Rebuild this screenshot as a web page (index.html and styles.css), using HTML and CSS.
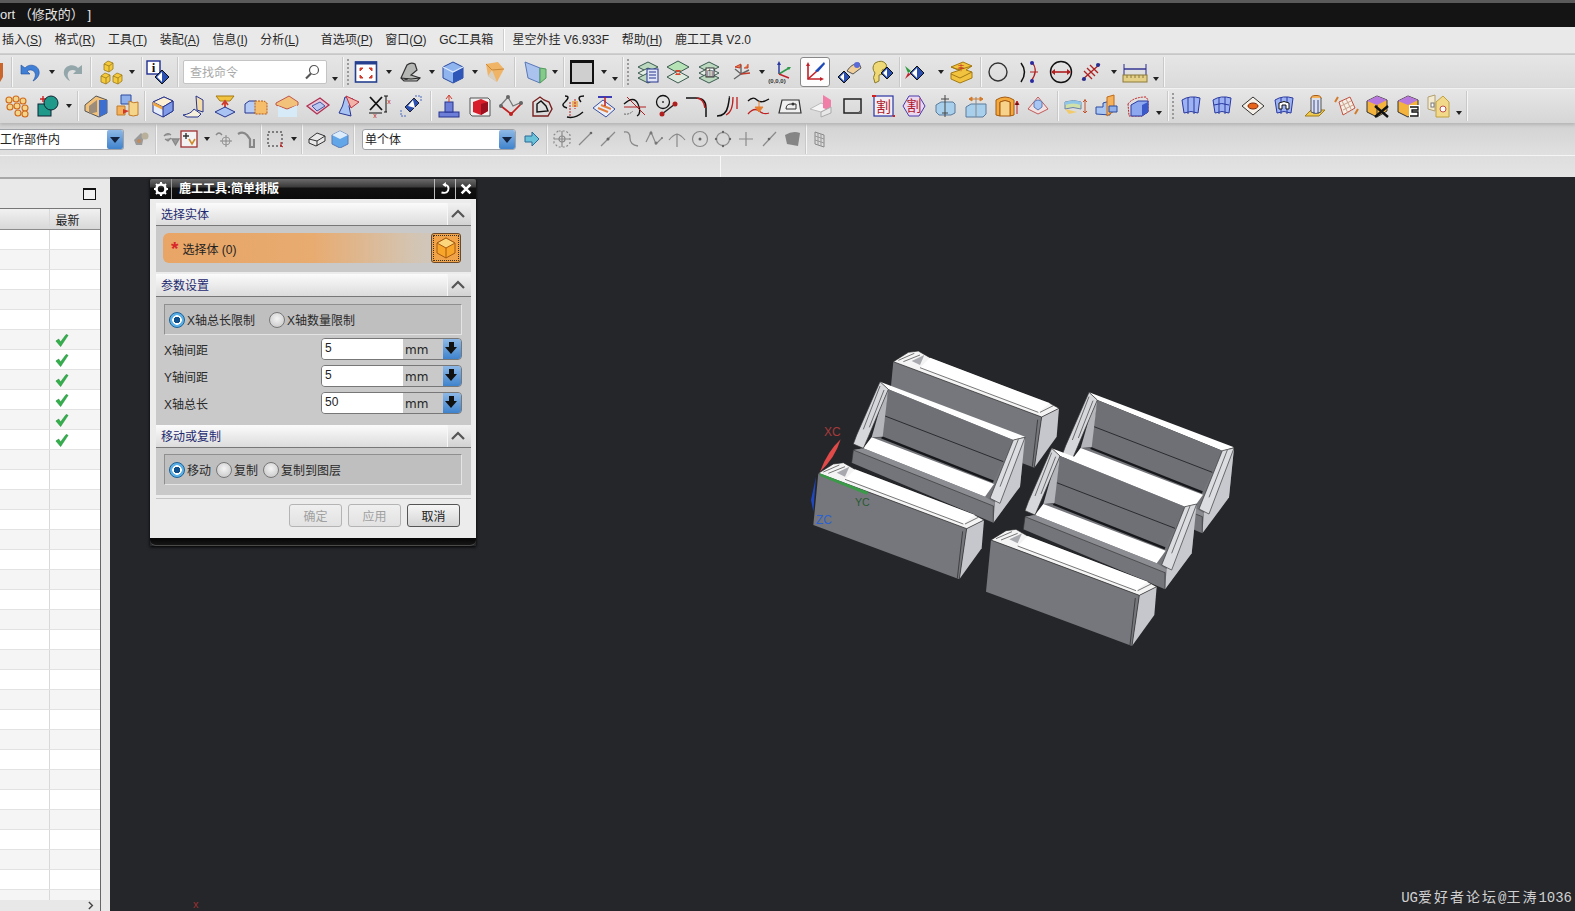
FILE: index.html
```html
<!DOCTYPE html>
<html lang="zh">
<head>
<meta charset="utf-8">
<title>NX</title>
<link rel="stylesheet" href="styles.css">
</head>
<body>
<svg class="defs" width="0" height="0">
  <defs>
    <g id="yc"><path d="M0 3 4 0l5 2v6l-4 3-5-2z" fill="#f4c93c" stroke="#9a7a1c" stroke-width=".8"/><path d="M0 3l5 2 4-3M5 5v6" fill="none" stroke="#9a7a1c" stroke-width=".8"/></g>
    <g id="cube"><path d="M2 7 12 2l10 5v11l-10 5-10-5z" fill="#8fb4ee" stroke="#2c4aa0"/><path d="M12 12 22 7v11l-10 5z" fill="#2e55b8"/><path d="M2 7l10 5 10-5" fill="none" stroke="#dfeaff" stroke-width="1.2"/></g>
    <g id="obox"><path d="M2 8 13 3l9 4v10l-10 6-10-5z" fill="#e6edfb" stroke="#27358f"/><path d="M2 8l10 5 10-6-9-4z" fill="#fdf0d2" stroke="#27358f"/><path d="M2 11l10 5v-3L2 8z" fill="#f2a53c"/><path d="M12 13l10-6v10l-10 6z" fill="#7f9ae6" stroke="#27358f"/></g>
    <g id="stack"><path d="M12 2 22 7l-10 5L2 7z" fill="#bcd9c0" stroke="#3a5a50"/><path d="M12 8 22 13l-10 5L2 13z" fill="#e6efe6" stroke="#3a5a50"/><path d="M12 13 22 18l-10 5L2 18z" fill="#bcd9c0" stroke="#3a5a50"/></g>
    <g id="face"><path d="M3 6q8-5 18-2l-2 15q-7-3-14 0z" fill="#9db2f2" stroke="#2838a0"/><path d="M9 4v16M15 3v17" stroke="#2838a0" fill="none"/></g>
    <path id="tick" d="M1 7l3-2 2 3 6-8 2 1-8 12z" fill="#33b04b" stroke="#1d8a36" stroke-width=".6"/>
    <g id="openB">
      <path d="M640 297 675 292 660 440 580 548 155 368 160 330 190 325 215 292z" fill="#74757a"/>
      <path d="M240 125 675 290 640 300 265 148z" fill="#fff"/>
      <path d="M265 148 640 300 580 425 245 290z" fill="#6f7075"/>
      <path d="M255 228 610 365" stroke="#2a2b2f" stroke-width="3"/>
      <path d="M245 292 580 425" stroke="#17181b" stroke-width="7"/>
      <path d="M215 292 582 432 555 470 190 325z" fill="#fff"/>
      <path d="M160 330 190 325 555 470 585 488 580 498z" fill="#8c8d92"/>
      <path d="M675 292 660 440 580 548 585 488 640 300z" fill="#c8c9cf"/>
      <path d="M265 148 248 290 215 292 240 205z" fill="#b4b5bb"/>
      <path d="M240 125 265 148 205 290 190 325 160 312 170 285z" fill="#d6d7db" stroke="#333" stroke-width="2"/>
      <path d="M190 268 240 138M208 262 252 150" stroke="#333" stroke-width="2" fill="none"/>
      <path d="M640 300 675 292 600 490 570 475z" fill="#dcdde1" stroke="#333" stroke-width="2"/>
      <path d="M600 440 655 298" stroke="#333" stroke-width="2"/>
      <path d="M160 330 580 498 580 548M155 368 160 330" fill="none" stroke="#333" stroke-width="2"/>
    </g>
    <g id="solidB">
      <path d="M55 400 500 566 478 718 40 555z" fill="#76777c"/>
      <path d="M500 566 552 540 545 625 478 718z" fill="#c6c7cd"/>
      <path d="M55 400 100 372 130 368 165 388 525 525 530 528 552 540 500 566z" fill="#f4f4f5" stroke="#222" stroke-width="2"/>
      <path d="M135 418 165 388 525 525 490 552z" fill="#fff"/>
      <path d="M110 398 148 380 135 410z" fill="#a8a9ae"/>
      <path d="M70 396 118 375M85 400 135 380M495 552 535 532M135 418 490 552" stroke="#333" stroke-width="2" fill="none"/>
      <path d="M500 566 478 718M488 574 472 715" fill="none" stroke="#222" stroke-width="2"/>
    </g>
  </defs>
</svg>

<div class="app">
  <header class="titlebar">ort （修改的） ]</header>

  <nav class="menubar">
    <span class="mi">插入(<u>S</u>)</span><span class="mi">格式(<u>R</u>)</span><span class="mi">工具(<u>T</u>)</span><span class="mi">装配(<u>A</u>)</span><span class="mi">信息(<u>I</u>)</span><span class="mi">分析(<u>L</u>)</span><span class="mi gapl">首选项(<u>P</u>)</span><span class="mi">窗口(<u>O</u>)</span><span class="mi">GC工具箱</span><span class="msep"></span><span class="mi">星空外挂 V6.933F</span><span class="mi">帮助(<u>H</u>)</span><span class="mi">鹿工工具 V2.0</span>
  </nav>

  <div class="tb tb1">
    <svg class="sliver" viewBox="0 0 4 24"><path d="M0 3h3v14l-3 5z" fill="#c9662c"/></svg>
    <i class="sep m8"></i>
    <svg class="ic m5" viewBox="0 0 24 24"><path d="M3 5v9h9l-3-3c3-2 7-1 8 2 1 2 0 5-2 8 4-2 7-6 6-10C20 5 11 3 7 8z" fill="#3f7fd6" stroke="#1f4fa0" stroke-width=".6"/></svg>
    <i class="dd m5"></i>
    <svg class="ic m4" viewBox="0 0 24 24"><path d="M21 5v9h-9l3-3c-3-2-7-1-8 2-1 2 0 5 2 8-4-2-7-6-6-10C4 5 13 3 17 8z" fill="#93a7ab"/></svg>
    <i class="sep m6"></i>
    <svg class="ic m7" viewBox="0 0 24 24"><use href="#yc" x="5" y="1"/><use href="#yc" x="2" y="13"/><use href="#yc" x="14" y="13"/></svg>
    <i class="dd m4"></i>
    <i class="sep m5"></i>
    <svg class="ic m3" viewBox="0 0 24 24"><rect x="1" y="1" width="13" height="13" fill="#fff" stroke="#1f2f8f" stroke-width="1.4"/><text x="7.5" y="12" class="svgi">i</text><path d="M16 10l7 7-7 7-7-7z" fill="#2c50b0" stroke="#111"/><path d="M16 12v10l-5-5z" fill="#fff"/></svg>
    <i class="sep m8"></i>
    <div class="search m4"><span>查找命令</span><svg class="lens" viewBox="0 0 16 16"><circle cx="10" cy="6" r="4.5" fill="#fff" stroke="#555" stroke-width="1.2"/><path d="M7 9.5 2 14.5" stroke="#555" stroke-width="2.2"/></svg></div>
    <i class="dd low m3"></i>
    <i class="sep m3"></i><i class="grip m3"></i>
    <svg class="ic m4" viewBox="0 0 24 24"><rect x="1.5" y="2" width="21" height="20" fill="#fff" stroke="#25408f" stroke-width="1.6"/><rect x="1" y="1.500" width="22" height="3" fill="#25408f"/><path d="M6 8h3L6 11zM18 8h-3l3 3zM6 18h3l-3-3zM18 18h-3l3-3z" fill="#d23a2a" stroke="#d23a2a"/></svg>
    <i class="dd m6"></i>
    <svg class="ic m4" viewBox="0 0 24 24"><path d="M3 18 9 5q4-3 8-1l2 6-6 5 9 3-3 3H6z" fill="#b5b7b5" stroke="#333" stroke-width="1.2"/><path d="M3 18l10 1 9-1" stroke="#222" fill="none"/><ellipse cx="8" cy="19" rx="2" ry="1" fill="#333"/></svg>
    <i class="dd m5"></i>
    <svg class="ic m4" viewBox="0 0 24 24"><use href="#cube"/></svg>
    <i class="dd m5"></i>
    <svg class="ic m3" viewBox="0 0 24 24"><path d="M3 4 15 2l6 7-7 13-9-6z" fill="#f0b467"/><path d="M3 4l6 6 12-1" fill="none" stroke="#c9893a"/><path d="M9 10l5 12-9-6z" fill="#d6d0c4"/></svg>
    <i class="sep m8"></i>
    <svg class="ic m7" viewBox="0 0 24 24"><path d="M2 2l15 6v15L5 18z" fill="#a9c2ee" stroke="#5a78b8"/><path d="M17 8l6 1v9l-6 5z" fill="#86c98d" stroke="#4d9b58"/></svg>
    <i class="dd m3"></i>
    <i class="sep m4"></i>
    <div class="swatch m5"></div>
    <i class="dd m5"></i><i class="dd low m1"></i>
    <i class="sep m3"></i><i class="grip m3"></i>
    <svg class="ic m6" viewBox="0 0 24 24"><use href="#stack"/><rect x="11" y="9" width="11" height="13" fill="#dfe5f6" stroke="#27358f"/><path d="M13 12h7M13 15h7M13 18h7" stroke="#27358f"/></svg>
    <svg class="ic m6" viewBox="0 0 24 24"><path d="M12 1 23 7l-11 6L1 7z" fill="#b6e3b6" stroke="#3a5a50"/><path d="M12 11 23 17l-11 6L1 17z" fill="#dce9dc" stroke="#3a5a50"/><path d="M9 10h6l-3 4zM9 15h6l-3-4z" fill="#d9442a"/></svg>
    <svg class="ic m7" viewBox="0 0 24 24"><use href="#stack"/><rect x="9" y="8" width="8" height="9" fill="#fff" stroke="#333"/><text x="13" y="16" class="svgj">血</text></svg>
    <svg class="ic m8" viewBox="0 0 24 24"><path d="M12 5v9l8-4M12 14l-7 5M12 14 6 9" fill="none" stroke="#666" stroke-width="1.4"/><path d="M15 8h4v-4M12 4l-6 3 5 1z" fill="#e8844a" stroke="#c23a2a"/><path d="M12 14l9-1" stroke="#c23a2a" stroke-width="1.6"/></svg>
    <i class="dd m4"></i>
    <svg class="ic m2" viewBox="0 0 24 24"><path d="M10 14V3" stroke="#2a3aa0" stroke-width="1.5"/><path d="M10 1l2 4H8z" fill="#2a3aa0"/><path d="M10 14 20 8" stroke="#2e9a4a" stroke-width="1.5"/><path d="M22 7l-4 0 2 3z" fill="#2e9a4a"/><path d="M10 14 20 18" stroke="#c0202a" stroke-width="1.5"/><text x="8" y="23" class="svgt">(0,0,0)</text></svg>
    <div class="btn-on m7"><svg class="ic" viewBox="0 0 24 24"><path d="M5 4v15h13" fill="none" stroke="#c0202a" stroke-width="1.6"/><path d="M5 19l9-8" stroke="#c0202a" stroke-width="1.6"/><path d="M12 11l9-9 1 2-7 8z" fill="#1d48b8"/><path d="M5 2 3 6h4zM21 19l-4-2v4z" fill="#c0202a"/></svg></div>
    <svg class="ic m8" viewBox="0 0 24 24"><path d="M6 11l6 6-6 6-6-6z" fill="#2c50b0" stroke="#111"/><path d="M6 13v8l-4-4z" fill="#fff"/><path d="M9 11q4-7 12-8l2 5-8 6z" fill="#f1cf9a" stroke="#555"/><circle cx="19" cy="5" r="3" fill="#5a6bd8"/></svg>
    <svg class="ic m8" viewBox="0 0 24 24"><path d="M5 23q-3-6 0-10Q1 8 5 3q7-4 11 1 2 4-4 6l1 4-4 1v6z" fill="#efd977" stroke="#8a7a2a"/><path d="M17 7l6 6-6 6-6-6z" fill="#2c50b0" stroke="#111"/><path d="M17 9v8l-4-4z" fill="#fff"/></svg>
    <i class="sep m6"></i>
    <svg class="ic m2" viewBox="0 0 24 24"><path d="M14 6l7 7-7 7-7-7z" fill="#2c50b0" stroke="#111"/><path d="M14 8v10l-5-5z" fill="#fff"/><path d="M2 6l6 5-3 2z" fill="#2a9a3a"/><path d="M2 19l6-5-3-1z" fill="#c0202a"/></svg>
    <i class="dd m9"></i>
    <svg class="ic m3" viewBox="0 0 24 24"><path d="M2 7 14 2l9 4-6 4 6 2v6l-12 5-9-4v-6l9-3-9-3z" fill="#f2c33e" stroke="#a47a14"/><path d="M2 7l7 3 14-4M2 14l9 4 12-6" fill="none" stroke="#a47a14"/><text x="12" y="10" class="svgr">丰</text></svg>
    <i class="sep m8"></i>
    <svg class="ic m4" viewBox="0 0 24 24"><circle cx="12" cy="12" r="9" fill="none" stroke="#333" stroke-width="1.4"/></svg>
    <svg class="ic m8" viewBox="0 0 24 24"><path d="M3 3q7 9 0 19" fill="none" stroke="#111" stroke-width="1.5"/><path d="M14 2q7 9-1 19" fill="none" stroke="#b02020" stroke-width="1.2"/><circle cx="14" cy="3" r="2" fill="#2a2aa0"/><circle cx="14" cy="21" r="2" fill="#2a2aa0"/><path d="M12 12h8" stroke="#b02020"/></svg>
    <svg class="ic m7" viewBox="0 0 24 24"><circle cx="12" cy="12" r="10.500" fill="none" stroke="#111" stroke-width="1.4"/><path d="M3 12h18" stroke="#b02020" stroke-width="1.6"/><path d="M2 12l4-3v6zM22 12l-4-3v6z" fill="#b02020"/></svg>
    <svg class="ic m6" viewBox="0 0 24 24"><path d="M3 20 21 4M8 8l8 8M5 11l8 8M11 5l8 8" stroke="#b02020" stroke-width="1.3" fill="none"/><circle cx="19" cy="5" r="2" fill="#23308f"/><circle cx="5" cy="19" r="2" fill="#23308f"/></svg>
    <i class="dd m6"></i>
    <svg class="ic m4" viewBox="0 0 24 24"><path d="M1 4v11M23 4v11" stroke="#2a2a90"/><path d="M1 9h22" stroke="#2a2a90" stroke-width="1.400"/><rect x="0" y="15" width="24" height="7" fill="#e3cf86" stroke="#8a7a3a"/><path d="M4 15v3M8 15v3M12 15v3M16 15v3M20 15v3" stroke="#8a7a3a"/></svg>
    <i class="dd low m4"></i>
    <i class="sep m3"></i>
  </div>

  <div class="tb tb2">
    <div class="grp m5">
      <svg class="ic" viewBox="0 0 24 24"><g fill="#f2d48a" stroke="#d06a1a" stroke-width="1.1"><circle cx="4" cy="6" r="3"/><circle cx="11" cy="5" r="3"/><circle cx="18" cy="7" r="3"/><circle cx="5" cy="13" r="3"/><circle cx="12" cy="12" r="3"/><circle cx="20" cy="14" r="3"/><circle cx="13" cy="19" r="3"/><circle cx="20" cy="20" r="3"/></g></svg>
      <svg class="ic" viewBox="0 0 24 24"><path d="M7 2v6M4 5h6" stroke="#d02020" stroke-width="1.400"/><rect x="2" y="10" width="13" height="12" fill="#1f9a8a" stroke="#123"/><circle cx="15" cy="9" r="7" fill="#1f9a8a" stroke="#123"/></svg>
    </div>
    <i class="dd m4"></i><i class="sep m4"></i>
    <div class="grp m5">
      <svg class="ic" viewBox="0 0 24 24"><path d="M1 11 12 2l11 4v13l-8 4L1 17z" fill="#f2c27a" stroke="#555"/><path d="M15 6h8v13l-8 4z" fill="#3c6fcf"/><path d="M5 12l8-6v12l-8 2z" fill="#9c8c7c"/></svg>
      <svg class="ic" viewBox="0 0 24 24"><path d="M6 1h10v9H6z" fill="#8fb0ea" stroke="#2c4aa0"/><path d="M14 7q5 3 9 1v13q-5 2-9 0z" fill="#f5d58a" stroke="#c07a2a"/><path d="M2 12l8 0v9H2z" fill="#f5b25a" stroke="#c07a2a"/><path d="M8 15l6 2-6 3z" fill="#d03a2a"/></svg>
    </div>
    <i class="sep m6"></i>
    <div class="grp m5">
      <svg class="ic" viewBox="0 0 24 24"><use href="#obox"/></svg>
      <svg class="ic" viewBox="0 0 24 24"><path d="M14 2l7 4v12l-6-2z" fill="#f3dca8" stroke="#27358f"/><path d="M1 21q8-1 11-6l7 5-3 3H5z" fill="#f5efdc" stroke="#27358f"/></svg>
      <svg class="ic" viewBox="0 0 24 24"><path d="M3 2h18l-4 5H7z" fill="#f2c33e" stroke="#a47a14"/><path d="M12 16V8m-3 3 3-4 3 4" stroke="#d03a2a" stroke-width="1.800" fill="none"/><path d="M2 18 12 13l10 5-10 5z" fill="#a9c3f2" stroke="#27358f"/></svg>
      <svg class="ic" viewBox="0 0 24 24"><path d="M1 10l4-3h7v12H1z" fill="#b6ccf4" stroke="#27358f"/><path d="M11 7h9l3 2v11H11z" fill="#f6be6a" stroke="#b25a1a" stroke-dasharray="2 1"/></svg>
      <svg class="ic" viewBox="0 0 24 24"><path d="M1 9 14 2l9 6v3L12 15 1 11z" fill="#f3c27a" stroke="#c0554a"/><path d="M3 12l9 4 10-5v12H3z" fill="#d7eaf8"/></svg>
      <svg class="ic" viewBox="0 0 24 24"><path d="M1 12 14 4l9 7-12 9z" fill="#e7c6d8" stroke="#b03050" stroke-width="1.300"/><path d="M6 12l8-4 5 4-8 5z" fill="#b8c6f0" stroke="#44559f"/></svg>
      <svg class="ic" viewBox="0 0 24 24"><path d="M8 3l8 2-4 7 2 10-12-3q4-6 6-16z" fill="#a8c2f2" stroke="#27358f"/><path d="M9 2l13 6-8 6z" fill="#f2b3a8" stroke="#c03040"/></svg>
      <svg class="ic" viewBox="0 0 24 24"><path d="M2 3l12 13M14 3 2 16" stroke="#111" stroke-width="1.800"/><path d="M1 19h13" stroke="#111"/><path d="M16 2h4M18 2v16M16 18h3" stroke="#111"/><text x="21" y="10" class="svgx">x</text><text x="7" y="24" class="svgx">x</text></svg>
      <svg class="ic" viewBox="0 0 24 24"><path d="M6 13l9-9 5 5-9 9z" fill="#2c50b0" stroke="#223"/><path d="M9 12l5-6 2 8z" fill="#fff"/><path d="M2 16v6h6M21 2h-6M22 2v6" stroke="#4a6ac0" stroke-dasharray="2 1" fill="none"/></svg>
    </div>
    <i class="sep m8"></i>
    <div class="grp m5">
      <svg class="ic" viewBox="0 0 24 24"><rect x="2" y="18" width="20" height="5" fill="#6d7ed8" stroke="#27358f"/><rect x="8" y="8" width="8" height="10" fill="#6d7ed8" stroke="#27358f"/><path d="M12 8V2M9 5l3-4 3 4" stroke="#d03a2a" fill="none"/></svg>
      <svg class="ic" viewBox="0 0 24 24"><path d="M2 4h18l2 2v16H4l-2-2z" fill="#f0f0f0" stroke="#555"/><path d="M5 8l8-3 7 3v9l-7 4-8-3z" fill="#d81e2a"/><path d="M13 10l7-2v9l-7 4z" fill="#9a1020"/></svg>
      <svg class="ic" viewBox="0 0 24 24"><path d="M1 12 9 3l5 9 9-4" fill="none" stroke="#777" stroke-width="1.300"/><path d="M2 12l10 8L23 9" fill="none" stroke="#c02020" stroke-width="1.700"/><circle cx="2" cy="12" r="2" fill="#666"/><circle cx="9" cy="3" r="2" fill="#666"/><circle cx="22" cy="9" r="2" fill="#666"/><circle cx="12" cy="20" r="2" fill="#c02020"/></svg>
      <svg class="ic" viewBox="0 0 24 24"><path d="M3 22V8l7-5 4 3 5 2 3 7-4 7z" fill="none" stroke="#7a2020" stroke-width="1.400"/><path d="M7 18V10l4-3 5 5 2 5z" fill="none" stroke="#111" stroke-width="1.400"/></svg>
      <svg class="ic" viewBox="0 0 24 24"><path d="M4 2q6 0 0 6-5 4 2 6M23 2q-8 0-3 6M6 23q8 2 16-5" fill="none" stroke="#111" stroke-width="1.400"/><rect x="11" y="7" width="6" height="6" fill="#e6b26a"/><path d="M14 5v10M9 8v14" stroke="#c02020" stroke-dasharray="2 1"/></svg>
      <svg class="ic" viewBox="0 0 24 24"><path d="M1 14 11 6l12 9-9 8z" fill="#e9eef8" stroke="#3a4fa0"/><path d="M6 14l10 4M9 11l10 4" stroke="#e08040" stroke-width="2"/><path d="M6 3h14" stroke="#2a2ab0" stroke-width="1.800"/><path d="M13 3v9" stroke="#c02020" stroke-width="1.500"/></svg>
      <svg class="ic" viewBox="0 0 24 24"><path d="M1 10q10-9 14 0t-1 12" fill="none" stroke="#111" stroke-width="1.300"/><path d="M1 13h22M4 3l18 18" stroke="#b02020"/><path d="M1 20q5 1 9-3" stroke="#666" stroke-dasharray="2 1" fill="none"/></svg>
      <svg class="ic" viewBox="0 0 24 24"><circle cx="9" cy="8" r="6.500" fill="none" stroke="#111" stroke-width="1.300"/><circle cx="9" cy="8" r="1" fill="#333"/><path d="M8 20 21 10" stroke="#222" stroke-width="1.400"/><circle cx="8" cy="20" r="2.500" fill="#b02020"/><circle cx="21" cy="10" r="2.500" fill="#b02020"/></svg>
      <svg class="ic" viewBox="0 0 24 24"><path d="M1 4h10q10 0 10 10v9" fill="none" stroke="#111" stroke-width="1.500"/><path d="M12 4q7 1 8 10" fill="none" stroke="#c02020" stroke-width="1.500"/></svg>
      <svg class="ic" viewBox="0 0 24 24"><path d="M1 22q9 0 11-10t1-9" fill="none" stroke="#111" stroke-width="1.500"/><path d="M10 21q7-3 7-18M21 3v12" fill="none" stroke="#c02020" stroke-width="1.300"/></svg>
      <svg class="ic" viewBox="0 0 24 24"><path d="M1 7q5-5 9-1t12-1" fill="none" stroke="#111" stroke-width="1.300"/><path d="M1 20q6-7 11-3t10 2" fill="none" stroke="#c02020" stroke-width="1.300"/><path d="M12 7v6m-4 0h8l-4 5z" fill="#e67e2e" stroke="#e67e2e"/></svg>
      <svg class="ic" viewBox="0 0 24 24"><path d="M4 6h17l2 13H1z" fill="#f0f0f0" stroke="#333" stroke-width="1.200"/><path d="M8 15q0-5 5-5h5v5z" fill="none" stroke="#333"/><circle cx="15" cy="10" r="1.500" fill="#333"/></svg>
      <svg class="ic" viewBox="0 0 24 24"><path d="M1 15 12 9l10 4-10 5z" fill="#f5f5f5" stroke="#bbb"/><path d="M14 1 22 6v11l-8-3z" fill="#f07fa8"/><path d="M12 18l10-5v6l-10 4z" fill="#e8e8e8" stroke="#aaa"/></svg>
      <svg class="ic" viewBox="0 0 24 24"><rect x="4" y="5" width="17" height="14" fill="none" stroke="#222" stroke-width="1.500"/><circle cx="20" cy="18" r="1.300" fill="#666"/></svg>
      <svg class="ic" viewBox="0 0 24 24"><rect x="3" y="2" width="19" height="20" fill="#f3eef4" stroke="#2a34a0" stroke-width="1.200"/><text x="12.500" y="18" class="svgk">割</text><path d="M1 2l4 0M22 22l2 0" stroke="#d02020" stroke-width="2"/></svg>
      <svg class="ic" viewBox="0 0 24 24"><path d="M7 2h10l6 10-6 10H7L1 12z" fill="#ead8f0" stroke="#4a3aa8"/><text x="12" y="17" class="svgk">割</text></svg>
      <svg class="ic" viewBox="0 0 24 24"><path d="M3 11l5-3h12l2 2v9l-4 2H6l-3-3z" fill="#a8d0ec" stroke="#5a7a9a"/><path d="M12 1v22M8 5h8M9 19h6" stroke="#444"/></svg>
      <svg class="ic" viewBox="0 0 24 24"><path d="M2 13l5-3h15v10l-3 3H2z" fill="#a8d0ec" stroke="#5a7a9a"/><path d="M12 3v20" stroke="#888"/><path d="M5 5h14M5 5l3-2v4zM19 5l-3-2v4z" stroke="#d27a2a" fill="#d27a2a"/></svg>
      <svg class="ic" viewBox="0 0 24 24"><path d="M1 6q9-6 18 0v15l-4 1V8q-5-3-10 0v14l-4-1z" fill="#f4a93c" stroke="#a65a10"/><path d="M5 8q5-3 10 0v14H5z" fill="#f7d28a" stroke="#a65a10"/><path d="M22 20V8m-2 3 2-4 2 4" stroke="#c02020"/></svg>
      <svg class="ic" viewBox="0 0 24 24"><path d="M12 3 22 15l-10 5L2 15z" fill="#f1e1e1" stroke="#c05a5a"/><path d="M8 8q4-4 8 0v5l-4 3-4-3z" fill="#a9c6f2" stroke="#5a7ab8"/></svg>
    </div>
    <i class="sep m8"></i>
    <div class="grp m5">
      <svg class="ic" viewBox="0 0 24 24"><path d="M1 8q9-3 16 0v7q-8-3-16 0z" fill="#cfe0a8" stroke="#6a82a8"/><path d="M1 8q9-3 16 0v3q-8-3-16 0z" fill="#8fc6e8"/><path d="M1 15l4 5 8-2" fill="#f2ca6a"/><path d="M21 5v14M19 8l2-2 2 2M19 17l2 2 2-2" stroke="#c0502a" fill="none"/></svg>
      <svg class="ic" viewBox="0 0 24 24"><path d="M1 13h7V9l7-2v14l-14-1z" fill="#a9c6f2" stroke="#2c4aa0"/><path d="M12 3 19 1v16l-7 5z" fill="#f5b25a" stroke="#c06a1a"/><path d="M14 12h8v6h-8z" fill="#8fb0ea" stroke="#2c4aa0"/></svg>
      <svg class="ic" viewBox="0 0 24 24"><path d="M2 10Q7 3 20 3l2 3v12l-6 4H3z" fill="none" stroke="#c02020" stroke-dasharray="2 1"/><path d="M5 11l7-4h10v11l-6 4H5z" fill="#8ea8ef" stroke="#2838a0"/><path d="M16 11l6-3v10l-6 4z" fill="#3a58c8"/></svg>
    </div>
    <i class="dd low m4"></i>
    <i class="sep m4"></i><i class="grip m3"></i>
    <div class="grp m4">
      <svg class="ic" viewBox="0 0 24 24"><use href="#face"/></svg>
      <svg class="ic" viewBox="0 0 24 24"><use href="#face"/><path d="M4 11q8-3 15 0" stroke="#2838a0" fill="none"/></svg>
      <svg class="ic" viewBox="0 0 24 24"><path d="M12 3 23 12l-11 9L1 12z" fill="#f5f1e8" stroke="#333"/><ellipse cx="12" cy="12" rx="5" ry="3" fill="#e8641a" stroke="#7a2a10"/></svg>
      <svg class="ic" viewBox="0 0 24 24"><use href="#face"/><path d="M7 15V9q5-3 10 0v6h-3v-4H10v4z" fill="#fff" stroke="#111"/></svg>
      <svg class="ic" viewBox="0 0 24 24"><path d="M2 22l6-6h14l-6 6z" fill="#efca50" stroke="#a47a14"/><ellipse cx="13" cy="4" rx="5" ry="2.500" fill="#f5b25a" stroke="#a65a10"/><path d="M8 4v14q5 3 10 0V4" fill="#dadfe8" stroke="#555"/><path d="M11 6v14M15 6v14" stroke="#3a4aa0"/></svg>
      <svg class="ic" viewBox="0 0 24 24"><path d="M5 8 16 3l5 11-12 7z" fill="#f5efe6" stroke="#c05040"/><path d="M8 7l6 12M12 5l6 12M7 12l10-5M9 16l10-5" stroke="#c8a08a"/><path d="M1 8l3-5M21 20l3-5" stroke="#d27a2a" stroke-width="2"/></svg>
      <svg class="ic" viewBox="0 0 24 24"><path d="M2 7l10-5 10 4v11l-10 6-10-5z" fill="#f4b33c" stroke="#333"/><path d="M2 7l10-5 10 4-10 5z" fill="#b678dc"/><path d="M12 11v12" stroke="#333"/><path d="M10 12 23 23M23 12 10 23" stroke="#111" stroke-width="2.400"/></svg>
      <svg class="ic" viewBox="0 0 24 24"><path d="M2 7l10-5 10 4v11l-10 6-10-5z" fill="#f4b33c" stroke="#333"/><path d="M2 7l10-5 10 4-10 5z" fill="#b678dc"/><rect x="13" y="11" width="11" height="12" fill="#fff"/><path d="M14 13h8v3h-6v2h6v4h-8" fill="none" stroke="#111" stroke-width="1.300"/></svg>
      <svg class="ic" viewBox="0 0 24 24"><path d="M1 3l7-2v16l-7-2z" fill="#f4ead0" stroke="#b0a070"/><path d="M9 8l7-6 6 6v15H9z" fill="#f2d98a" stroke="#c0a040"/><rect x="4" y="9" width="3" height="4" fill="#fff" stroke="#777"/><circle cx="16" cy="15" r="3" fill="#fff" stroke="#c05050"/></svg>
    </div>
    <i class="dd low m3"></i>
    <i class="sep m3"></i>
  </div>

  <div class="tb tb3">
    <div class="combo combo1"><span>工作部件内</span><b class="arr"></b></div>
    <svg class="sm m8" viewBox="0 0 18 18"><path d="M2 10 9 3l3 3-2 9H4z" fill="#9a9a9a"/><circle cx="13" cy="6" r="3.500" fill="#b8b09a"/><circle cx="7" cy="11" r="2" fill="#c08a5a"/></svg>
    <i class="sep m6"></i>
    <svg class="sm m5" viewBox="0 0 18 18"><path d="M2 6q3-4 7-1M3 9l3 2 3-3M10 9h7l-3.500 6z" stroke="#888" fill="#9a9a9a" stroke-width="1.300"/></svg>
    <svg class="sm" viewBox="0 0 18 18"><rect x="1" y="1" width="16" height="16" fill="#f2f2f2" stroke="#a03030" stroke-width="1.300"/><path d="M6 3v6M3 6h6" stroke="#333" stroke-width="1.400"/><path d="M9 9l3 5 3-5" fill="none" stroke="#d08a2a" stroke-width="1.600"/></svg>
    <i class="dd m4"></i>
    <svg class="sm m3" viewBox="0 0 18 18"><path d="M1 5q3-4 6 0" fill="none" stroke="#888" stroke-width="1.300"/><circle cx="11" cy="11" r="4" fill="none" stroke="#999"/><path d="M11 5v12M5 11h12" stroke="#888"/></svg>
    <svg class="sm m4" viewBox="0 0 18 18"><path d="M1 4q5-3 9 1l3 4v8h4V9" fill="none" stroke="#888" stroke-width="2.200"/></svg>
    <i class="sep m6"></i>
    <svg class="sm m4" viewBox="0 0 18 18"><rect x="2" y="2" width="14" height="14" fill="none" stroke="#222" stroke-dasharray="2 2"/><path d="M14 15l3 2M15 12v5" stroke="#c02020"/></svg>
    <i class="dd m5"></i>
    <i class="sep m3"></i>
    <svg class="sm m5" viewBox="0 0 18 18"><path d="M1 9l8-6 8 3v5l-9 5-7-3z" fill="#e8e8e8" stroke="#333"/><path d="M1 9l8 2 8-5M9 11v5" fill="none" stroke="#333"/></svg>
    <svg class="sm m5" viewBox="0 0 18 18"><path d="M1 5l8-4 8 4v9l-8 4-8-4z" fill="#62a6e8" stroke="#5a7ab8"/><path d="M1 5l8 4 8-4-8-4z" fill="#dcecfa"/></svg>
    <i class="sep m5"></i>
    <div class="combo combo2 m7"><span>单个体</span><b class="arr"></b></div>
    <svg class="sm m7" viewBox="0 0 18 18"><path d="M2 6h7V2l7 7-7 7v-4H2z" fill="#69c2d8" stroke="#2c6a98"/></svg>
    <i class="sep m6"></i>
    <div class="grp3 m5">
      <svg class="sm" viewBox="0 0 18 18"><g fill="none" stroke="#8a8a8a" stroke-width="1.200"><path d="M9 1v16M1 9h16"/><path d="M5 1 1 5v8l4 4h8l4-4V5l-4-4z" stroke-dasharray="2 2"/><circle cx="9" cy="9" r="3"/></g></svg>
      <svg class="sm" viewBox="0 0 18 18"><path d="M3 15 15 3" stroke="#8a8a8a" stroke-width="1.200"/><circle cx="15" cy="3" r="1.300" fill="#666"/></svg>
      <svg class="sm" viewBox="0 0 18 18"><path d="M2 16 16 2" stroke="#8a8a8a" stroke-width="1.200"/><circle cx="9" cy="9" r="1.500" fill="#666"/></svg>
      <svg class="sm" viewBox="0 0 18 18"><path d="M2 2q6-1 6 6t8 8" fill="none" stroke="#8a8a8a" stroke-width="1.300"/></svg>
      <svg class="sm" viewBox="0 0 18 18"><path d="M1 12 6 2l5 12 6-6" fill="none" stroke="#8a8a8a" stroke-width="1.200"/><circle cx="6" cy="3" r="1.500" fill="#777"/><circle cx="11" cy="13" r="1.500" fill="#777"/><circle cx="17" cy="8" r="1" fill="#777"/></svg>
      <svg class="sm" viewBox="0 0 18 18"><path d="M9 17V4M1 10q4-5 8-6 4 1 8 6" fill="none" stroke="#8a8a8a" stroke-width="1.200"/></svg>
      <svg class="sm" viewBox="0 0 18 18"><circle cx="9" cy="9" r="7.500" fill="none" stroke="#8a8a8a" stroke-width="1.200"/><circle cx="9" cy="9" r="1.500" fill="#666"/></svg>
      <svg class="sm" viewBox="0 0 18 18"><circle cx="9" cy="9" r="6.500" fill="none" stroke="#8a8a8a" stroke-width="1.200"/><g fill="#666"><circle cx="9" cy="2" r="1.200"/><circle cx="9" cy="16" r="1.200"/><circle cx="2" cy="9" r="1.200"/><circle cx="16" cy="9" r="1.200"/></g></svg>
      <svg class="sm" viewBox="0 0 18 18"><path d="M9 2v14M2 9h14" stroke="#8a8a8a" stroke-width="1.200"/></svg>
      <svg class="sm" viewBox="0 0 18 18"><path d="M3 16 16 2" stroke="#8a8a8a" stroke-width="1.200"/><circle cx="9" cy="9" r="1.300" fill="#666"/></svg>
      <svg class="sm" viewBox="0 0 18 18"><path d="M2 5q8-5 15-2l-2 13-11-2z" fill="#858585"/></svg>
    </div>
    <i class="sep m5"></i>
    <svg class="sm m3" viewBox="0 0 18 18"><path d="M5 2l9 3v12l-9-3z" fill="none" stroke="#888"/><path d="M5 6l9 3M5 10l9 3M8 3v12M11 4v12" stroke="#999"/></svg>
  </div>

  <div class="tb4"><i class="vline"></i></div>

  <main class="workspace">
    <aside class="navpanel">
      <div class="paneltop"><span class="restore"></span></div>
      <div class="tbl">
        <div class="thead"><span class="c1"></span><span class="c2">最新</span></div>
        <div class="tr"><i class="c1"></i><i class="c2"></i></div>
        <div class="tr alt"><i class="c1"></i><i class="c2"></i></div>
        <div class="tr"><i class="c1"></i><i class="c2"></i></div>
        <div class="tr alt"><i class="c1"></i><i class="c2"></i></div>
        <div class="tr"><i class="c1"></i><i class="c2"></i></div>
        <div class="tr alt"><i class="c1"></i><i class="c2"><svg class="ok" viewBox="0 0 15 13"><use href="#tick"/></svg></i></div>
        <div class="tr"><i class="c1"></i><i class="c2"><svg class="ok" viewBox="0 0 15 13"><use href="#tick"/></svg></i></div>
        <div class="tr alt"><i class="c1"></i><i class="c2"><svg class="ok" viewBox="0 0 15 13"><use href="#tick"/></svg></i></div>
        <div class="tr"><i class="c1"></i><i class="c2"><svg class="ok" viewBox="0 0 15 13"><use href="#tick"/></svg></i></div>
        <div class="tr alt"><i class="c1"></i><i class="c2"><svg class="ok" viewBox="0 0 15 13"><use href="#tick"/></svg></i></div>
        <div class="tr"><i class="c1"></i><i class="c2"><svg class="ok" viewBox="0 0 15 13"><use href="#tick"/></svg></i></div>
        <div class="tr alt"><i class="c1"></i><i class="c2"></i></div>
        <div class="tr"><i class="c1"></i><i class="c2"></i></div>
        <div class="tr alt"><i class="c1"></i><i class="c2"></i></div>
        <div class="tr"><i class="c1"></i><i class="c2"></i></div>
        <div class="tr alt"><i class="c1"></i><i class="c2"></i></div>
        <div class="tr"><i class="c1"></i><i class="c2"></i></div>
        <div class="tr alt"><i class="c1"></i><i class="c2"></i></div>
        <div class="tr"><i class="c1"></i><i class="c2"></i></div>
        <div class="tr alt"><i class="c1"></i><i class="c2"></i></div>
        <div class="tr"><i class="c1"></i><i class="c2"></i></div>
        <div class="tr alt"><i class="c1"></i><i class="c2"></i></div>
        <div class="tr"><i class="c1"></i><i class="c2"></i></div>
        <div class="tr alt"><i class="c1"></i><i class="c2"></i></div>
        <div class="tr"><i class="c1"></i><i class="c2"></i></div>
        <div class="tr alt"><i class="c1"></i><i class="c2"></i></div>
        <div class="tr"><i class="c1"></i><i class="c2"></i></div>
        <div class="tr alt"><i class="c1"></i><i class="c2"></i></div>
        <div class="tr"><i class="c1"></i><i class="c2"></i></div>
        <div class="tr alt"><i class="c1"></i><i class="c2"></i></div>
        <div class="tr"><i class="c1"></i><i class="c2"></i></div>
        <div class="tr alt"><i class="c1"></i><i class="c2"></i></div>
        <div class="tr"><i class="c1"></i><i class="c2"></i></div>
        <div class="tr alt short"><i class="c1"></i><i class="c2"></i></div>
        <div class="hscroll"><svg class="chev" viewBox="0 0 8 10"><path d="M1 1l4 4-4 4" fill="none" stroke="#444" stroke-width="1.600"/></svg></div>
      </div>
    </aside>

    <section class="viewport">
      <svg class="model" viewBox="0 0 1350 930">
        <use href="#solidB" transform="translate(225 -335)"/>
        <use href="#openB"/>
        <use href="#solidB"/>
        <use href="#openB" transform="translate(627 32)"/>
        <use href="#openB" transform="translate(515 200)"/>
        <use href="#solidB" transform="translate(518 200)"/>
        <path d="M60 395Q82 335 122 298 105 355 60 395z" fill="#e04a48"/>
        <path d="M60 400 205 456 200 464 60 408z" fill="#3a9a48"/>
        <path d="M48 410 40 515 33 480z" fill="#1f48c0"/>
        <text x="72" y="288" class="ax axx">XC</text>
        <text x="48" y="552" class="ax axz">ZC</text>
        <text x="165" y="498" class="ax axy">YC</text>
      </svg>
      <span class="origin">x</span>
      <span class="mark">UG<span class="cjk">爱好者论坛</span>@<span class="cjk">王涛</span>1036</span>

      <div class="dialog">
        <div class="dtitle">
          <svg class="gear" viewBox="0 0 16 16"><circle cx="8" cy="8" r="4.500" fill="none" stroke="#fff" stroke-width="2.600"/><path d="M8 1v2M8 13v2M1 8h2M13 8h2M3 3l1.500 1.500M11.500 11.500 13 13M13 3l-1.500 1.500M3 13l1.500-1.500" stroke="#fff" stroke-width="2"/></svg>
          <span class="dname">鹿工工具:简单排版</span>
          <svg class="dbtn" viewBox="0 0 16 16"><path d="M4 12q8 2 8-5 0-3-4-4" fill="none" stroke="#fff" stroke-width="2.200"/><path d="M9 0 5 3l4 3z" fill="#fff"/></svg>
          <svg class="dbtn" viewBox="0 0 16 16"><path d="M3 3l10 10M13 3 3 13" stroke="#fff" stroke-width="3"/></svg>
        </div>
        <div class="dbody">
          <div class="shead"><span>选择实体</span><b class="fold"><svg viewBox="0 0 14 10"><path d="M1 8l6-6 6 6" fill="none" stroke="#555" stroke-width="2.200"/></svg></b></div>
          <div class="sbody s1">
            <div class="req">
              <span class="star">*</span><span>选择体 (0)</span>
              <div class="pick"><svg viewBox="0 0 22 22"><path d="M2 6l9-5 9 5v10l-9 5-9-5z" fill="#f7a62a" stroke="#a85a10"/><path d="M2 6l9 5 9-5-9-5z" fill="#fcd67a" stroke="#a85a10"/><path d="M11 11v10" stroke="#a85a10"/></svg></div>
            </div>
          </div>
          <div class="shead"><span>参数设置</span><b class="fold"><svg viewBox="0 0 14 10"><path d="M1 8l6-6 6 6" fill="none" stroke="#555" stroke-width="2.200"/></svg></b></div>
          <div class="sbody s2">
            <div class="gbox g1">
              <i class="radio on"></i><span class="rl">X轴总长限制</span>
              <i class="radio m14"></i><span class="rl">X轴数量限制</span>
            </div>
            <div class="frow"><label>X轴间距</label><div class="num"><span class="val">5</span><span class="unit">mm</span><b class="go"></b></div></div>
            <div class="frow"><label>Y轴间距</label><div class="num"><span class="val">5</span><span class="unit">mm</span><b class="go"></b></div></div>
            <div class="frow"><label>X轴总长</label><div class="num"><span class="val">50</span><span class="unit">mm</span><b class="go"></b></div></div>
          </div>
          <div class="shead"><span>移动或复制</span><b class="fold"><svg viewBox="0 0 14 10"><path d="M1 8l6-6 6 6" fill="none" stroke="#555" stroke-width="2.200"/></svg></b></div>
          <div class="sbody s3">
            <div class="gbox g2">
              <i class="radio on"></i><span class="rl">移动</span>
              <i class="radio m3"></i><span class="rl">复制</span>
              <i class="radio m3"></i><span class="rl">复制到图层</span>
            </div>
          </div>
          <div class="dfoot">
            <button class="bt off">确定</button><button class="bt off">应用</button><button class="bt">取消</button>
          </div>
        </div>
        <div class="dend"></div>
      </div>
    </section>
  </main>
</div>
</body>
</html>
```

FILE: styles.css
```css
* { box-sizing: border-box; }
html, body { margin: 0; padding: 0; height: 100%; overflow: hidden; }
body {
  font-family: "Liberation Sans", "Noto Sans CJK SC", sans-serif;
  font-size: 12px;
  color: #222;
  background: #25262a;
}
.defs { position: absolute; }
i, b { display: block; font-style: normal; }
.app { width: 1575px; height: 911px; display: flex; flex-direction: column; }

.titlebar {
  height: 27px;
  border-top: 3px solid #5a5a5a;
  background: #141414;
  color: #e6e6e6;
  font-size: 13px;
  line-height: 24px;
  white-space: pre;
}

.menubar {
  height: 27px;
  background: #e9e9e9;
  border-bottom: 1px solid #cfcfcf;
  display: flex;
  align-items: center;
  padding: 0 0 4px 2px;
  gap: 12.6px;
  white-space: nowrap;
  color: #2a2a2a;
}
.mi.gapl { margin-left: 9px; }
.msep { width: 1px; height: 22px; background: #cdcdcd; box-shadow: 1px 0 #fff; margin: 4px -4px 0 -3px; }

.tb { display: flex; align-items: center; flex: none; }
.tb1 { height: 34px; background: linear-gradient(#e6e6e6, #dadada); border-top: 1px solid #c7c7c7; }
.tb2 { height: 35px; background: linear-gradient(#e6e6e6, #d6d6d6); border-top: 1px solid #f2f2f2; box-shadow: 0 2px 3px #b5b5b5; position: relative; }
.tb3 { height: 32px; background: linear-gradient(#d2d2d2, #e0e0e0); }
.tb4 { height: 22px; flex: none; background: linear-gradient(#dedede, #e4e4e4); border-top: 1px solid #f5f5f5; padding-left: 720px; }
.vline { width: 1px; height: 100%; background: #f7f7f7; }

.ic { width: 24px; height: 24px; flex: none; display: block; overflow: visible; }
.sm { width: 18px; height: 18px; flex: none; display: block; }
.sliver { width: 4px; height: 24px; flex: none; }
.sep { width: 1px; height: 30px; background: #f6f6f6; box-shadow: -1px 0 #c9c9c9; flex: none; }
.grip { width: 3px; height: 26px; flex: none; border-left: 2px dotted #9a9a9a; }
.dd { width: 10px; height: 4px; flex: none; position: relative; }
.dd::after {
  content: ""; position: absolute; left: 2px; top: 0;
  border: 3px solid transparent; border-top: 4px solid #222; border-bottom: 0;
}
.dd.low { transform: translateY(7px); }
.grp { display: flex; gap: 7px; flex: none; }
.grp3 { display: flex; gap: 5px; flex: none; }

.m1 { margin-left: 1px; } .m2 { margin-left: 2px; } .m3 { margin-left: 3px; }
.m4 { margin-left: 4px; } .m5 { margin-left: 5px; } .m6 { margin-left: 6px; }
.m7 { margin-left: 7px; } .m8 { margin-left: 8px; } .m9 { margin-left: 9px; }
.m14 { margin-left: 14px; }

.search {
  width: 144px; height: 24px; flex: none;
  background: #fff; border: 1px solid #c4c4c4; border-radius: 2px;
  display: flex; align-items: center; justify-content: space-between;
  padding: 0 6px; color: #a8a8a8; font-size: 12px;
}
.lens { width: 16px; height: 16px; }
.swatch { width: 24px; height: 24px; flex: none; background: #cfcfcf; border: 2px solid #111; border-top-width: 3px; }
.btn-on { width: 30px; height: 30px; flex: none; background: #fdfdfd; border: 1px solid #888; border-radius: 3px; display: flex; align-items: center; justify-content: center; }

.svgi { font: bold 13px "Liberation Serif", serif; fill: #111; text-anchor: middle; }
.svgj { font-size: 8px; fill: #333; text-anchor: middle; }
.svgt { font-size: 6px; font-weight: bold; fill: #333; text-anchor: middle; }
.svgr { font-size: 7px; fill: #c02020; text-anchor: middle; }
.svgx { font-size: 7px; fill: #c02020; text-anchor: middle; }
.svgk { font-size: 15px; fill: #b01a2a; text-anchor: middle; }

.combo { height: 21px; flex: none; background: #fff; border: 1px solid #9fa3a8; border-radius: 3px; display: flex; align-items: center; justify-content: space-between; position: relative; }
.combo span { padding: 0 0 2px 2px; }
.combo1 { width: 124px; border-left: 0; border-radius: 0 3px 3px 0; }
.combo1 span { padding-left: 0; }
.combo2 { width: 154px; }
.arr { width: 16px; height: 19px; background: linear-gradient(#8db8e6, #3f83cd); border-radius: 2px; position: relative; }
.arr::after { content: ""; position: absolute; left: 3px; top: 7px; border: 5px solid transparent; border-top: 6px solid #13233f; border-bottom: 0; }

.workspace { flex: 1; display: flex; min-height: 0; }
.navpanel { width: 110px; flex: none; background: #e9e9e9; display: flex; flex-direction: column; overflow: hidden; }
.paneltop { height: 31px; flex: none; border-top: 2px solid #a8a8a8; position: relative; display: flex; justify-content: flex-end; padding: 9px 14px 0 0; }
.restore { width: 13px; height: 12px; border: 1px solid #111; border-top-width: 2px; background: #f1f1f1; }
.tbl { width: 101px; flex: 1; border-right: 1px solid #666; border-top: 1px solid #777; background: #fff; display: flex; flex-direction: column; min-height: 0; }
.thead { height: 21px; flex: none; display: flex; background: linear-gradient(#f1f1f1, #d8d8d8); border-bottom: 1px solid #8c8c8c; }
.thead .c2 { text-align: center; line-height: 24px; color: #222; }
.c1 { width: 50px; flex: none; border-right: 1px solid #d9d9d9; }
.c2 { flex: 1; display: flex; align-items: center; justify-content: center; padding: 2px 26px 0 0; }
.thead .c2 { padding: 0 15px 0 0; display: block; }
.tr { height: 20px; flex: none; display: flex; border-bottom: 1px solid #e2e2e2; background: #fff; }
.tr.alt { background: #f5f5f5; }
.tr.short { height: 10px; border-bottom: 0; }
.ok { width: 14px; height: 13px; display: block; }
.hscroll { flex: 1; background: #e8e8e8; position: relative; display: flex; justify-content: flex-end; align-items: center; padding-right: 5px; }
.chev { width: 7px; height: 9px; }

.viewport { flex: 1; position: relative; background: #25262a; overflow: hidden; }
.model { position: absolute; left: 690px; top: 163px; width: 450px; height: 310px; }
.ax { font-size: 36px; font-family: "Liberation Sans", sans-serif; }
.axx { fill: #a83a3a; }
.axz { fill: #2a62d0; }
.axy { fill: #2a5a35; font-size: 32px; }
.origin { position: absolute; left: 83px; bottom: 1px; color: #9a3030; font-size: 11px; line-height: 11px; }
.mark {
  position: absolute; right: 3px; bottom: 5px;
  font-family: "Liberation Mono", "Noto Sans CJK SC", monospace;
  font-size: 14px; color: #d0d0d0; line-height: 16px; white-space: nowrap;
}
.cjk { letter-spacing: 2px; font-size: 14px; }

.dialog { position: absolute; left: 40px; top: 2px; width: 326px; display: flex; flex-direction: column; box-shadow: 0 1px 3px #000; }
.dtitle {
  height: 20px; flex: none; display: flex; align-items: center;
  background: linear-gradient(#6b6b6b 0, #3a3a3a 40%, #111 45%, #0b0b0b 100%);
  color: #fff; font-weight: bold; padding-left: 3px; border-radius: 2px 2px 0 0;
}
.gear { width: 16px; height: 16px; flex: none; }
.dname { flex: 1; margin-left: 2px; padding-left: 7px; border-left: 1px solid #999; line-height: 20px; }
.dbtn { width: 21px; height: 20px; padding: 3px; border-left: 1px solid #bbb; flex: none; }
.dbody { background: #ececec; padding: 4px 5px 0 6px; height: 339px; display: flex; flex-direction: column; flex: none; }
.dend { height: 8px; flex: none; background: linear-gradient(#050505, #161616); border-bottom: 1px solid #4a4a4a; border-radius: 0 0 6px 6px; }
.shead {
  height: 23px; flex: none; display: flex; justify-content: space-between;
  background: linear-gradient(#fbfbfb, #dcdcdc); border-bottom: 1px solid #777;
  color: #1e2a70; line-height: 25px; padding-left: 5px;
}
.fold { width: 24px; border-left: 1px solid #f7f7f7; display: flex; align-items: center; padding-left: 3px; background: linear-gradient(#f2f2f2, #d2d2d2); }
.fold svg { width: 14px; height: 10px; }
.sbody { background: #c9c9c9; flex: none; }
.s1 { height: 46px; margin-bottom: 2px; padding: 7px 10px 0 7px; }
.s2 { height: 128px; padding: 7px 9px 0 8px; }
.s3 { height: 47px; padding: 6px 9px 0 8px; }
.req {
  height: 30px; display: flex; align-items: center; position: relative;
  background: linear-gradient(90deg, #e8a566 0, #e8ab70 50%, #d3c5b4 85%, #c9c9c9 100%);
  border-radius: 6px 0 0 6px; padding-left: 8px; font-size: 12px;
}
.star { color: #d8262a; font-size: 19px; font-weight: bold; margin-right: 4px; line-height: 19px; }
.pick {
  position: absolute; right: 0; top: 0; width: 30px; height: 30px;
  background: #f0a348; border: 1px solid #6a4a2a; border-radius: 3px;
  outline: 1px dotted #333; outline-offset: -3px;
  display: flex; align-items: center; justify-content: center;
}
.pick svg { width: 22px; height: 22px; }
.gbox { background: #bfbfbf; border: 1px solid #e4e4e4; border-top-color: #8f8f8f; border-left-color: #8f8f8f; display: flex; align-items: center; padding-left: 4px; }
.g1 { height: 31px; margin-bottom: 3px; }
.g2 { height: 31px; }
.radio { width: 16px; height: 16px; flex: none; border-radius: 50%; border: 1px solid #777; background: radial-gradient(circle at 50% 40%, #f4f4f4, #c2c2c2); }
.radio.on { border-color: #1c5f96; background: radial-gradient(circle, #0e4f8c 0 3px, #fff 3.5px 4.500px, #5cb0e6 5px); }
.rl { margin-left: 2px; white-space: nowrap; color: #2a2a2a; }
.g2 .radio.m3 { margin-left: 5px; }
.frow { height: 27px; display: flex; align-items: center; justify-content: space-between; padding-bottom: 5px; }
.frow label { color: #2a2a2a; }
.num { width: 141px; height: 22px; display: flex; border: 1px solid #777; border-radius: 4px; background: #c9c9c9; overflow: hidden; }
.val { width: 81px; background: #fff; padding-left: 3px; line-height: 18px; }
.unit { flex: 1; padding-left: 2px; line-height: 22px; font-size: 12px; font-family: "DejaVu Sans", sans-serif; }
.go { width: 18px; flex: none; background: linear-gradient(#8db8e6, #3f83cd); position: relative; }
.go::before { content: ""; position: absolute; left: 6px; top: 3px; width: 5px; height: 5px; background: #111; }
.go::after { content: ""; position: absolute; left: 2px; top: 8px; border: 6px solid transparent; border-top: 7px solid #111; border-bottom: 0; }
.dfoot { border-top: 1px solid #c4c4c4; margin-top: 3px; height: 40px; flex: none; display: flex; justify-content: flex-end; gap: 6px; padding: 5px 11px 0 0; }
.bt {
  width: 53px; height: 23px; font: 12px "Liberation Sans", "Noto Sans CJK SC", sans-serif;
  background: linear-gradient(#f6f6f6, #d4d4d4); border: 1px solid #555; border-radius: 3px; color: #222; padding: 0;
}
.bt.off { border-color: #b4b4b4; color: #a0a0a0; background: linear-gradient(#efefef, #e2e2e2); }
```
